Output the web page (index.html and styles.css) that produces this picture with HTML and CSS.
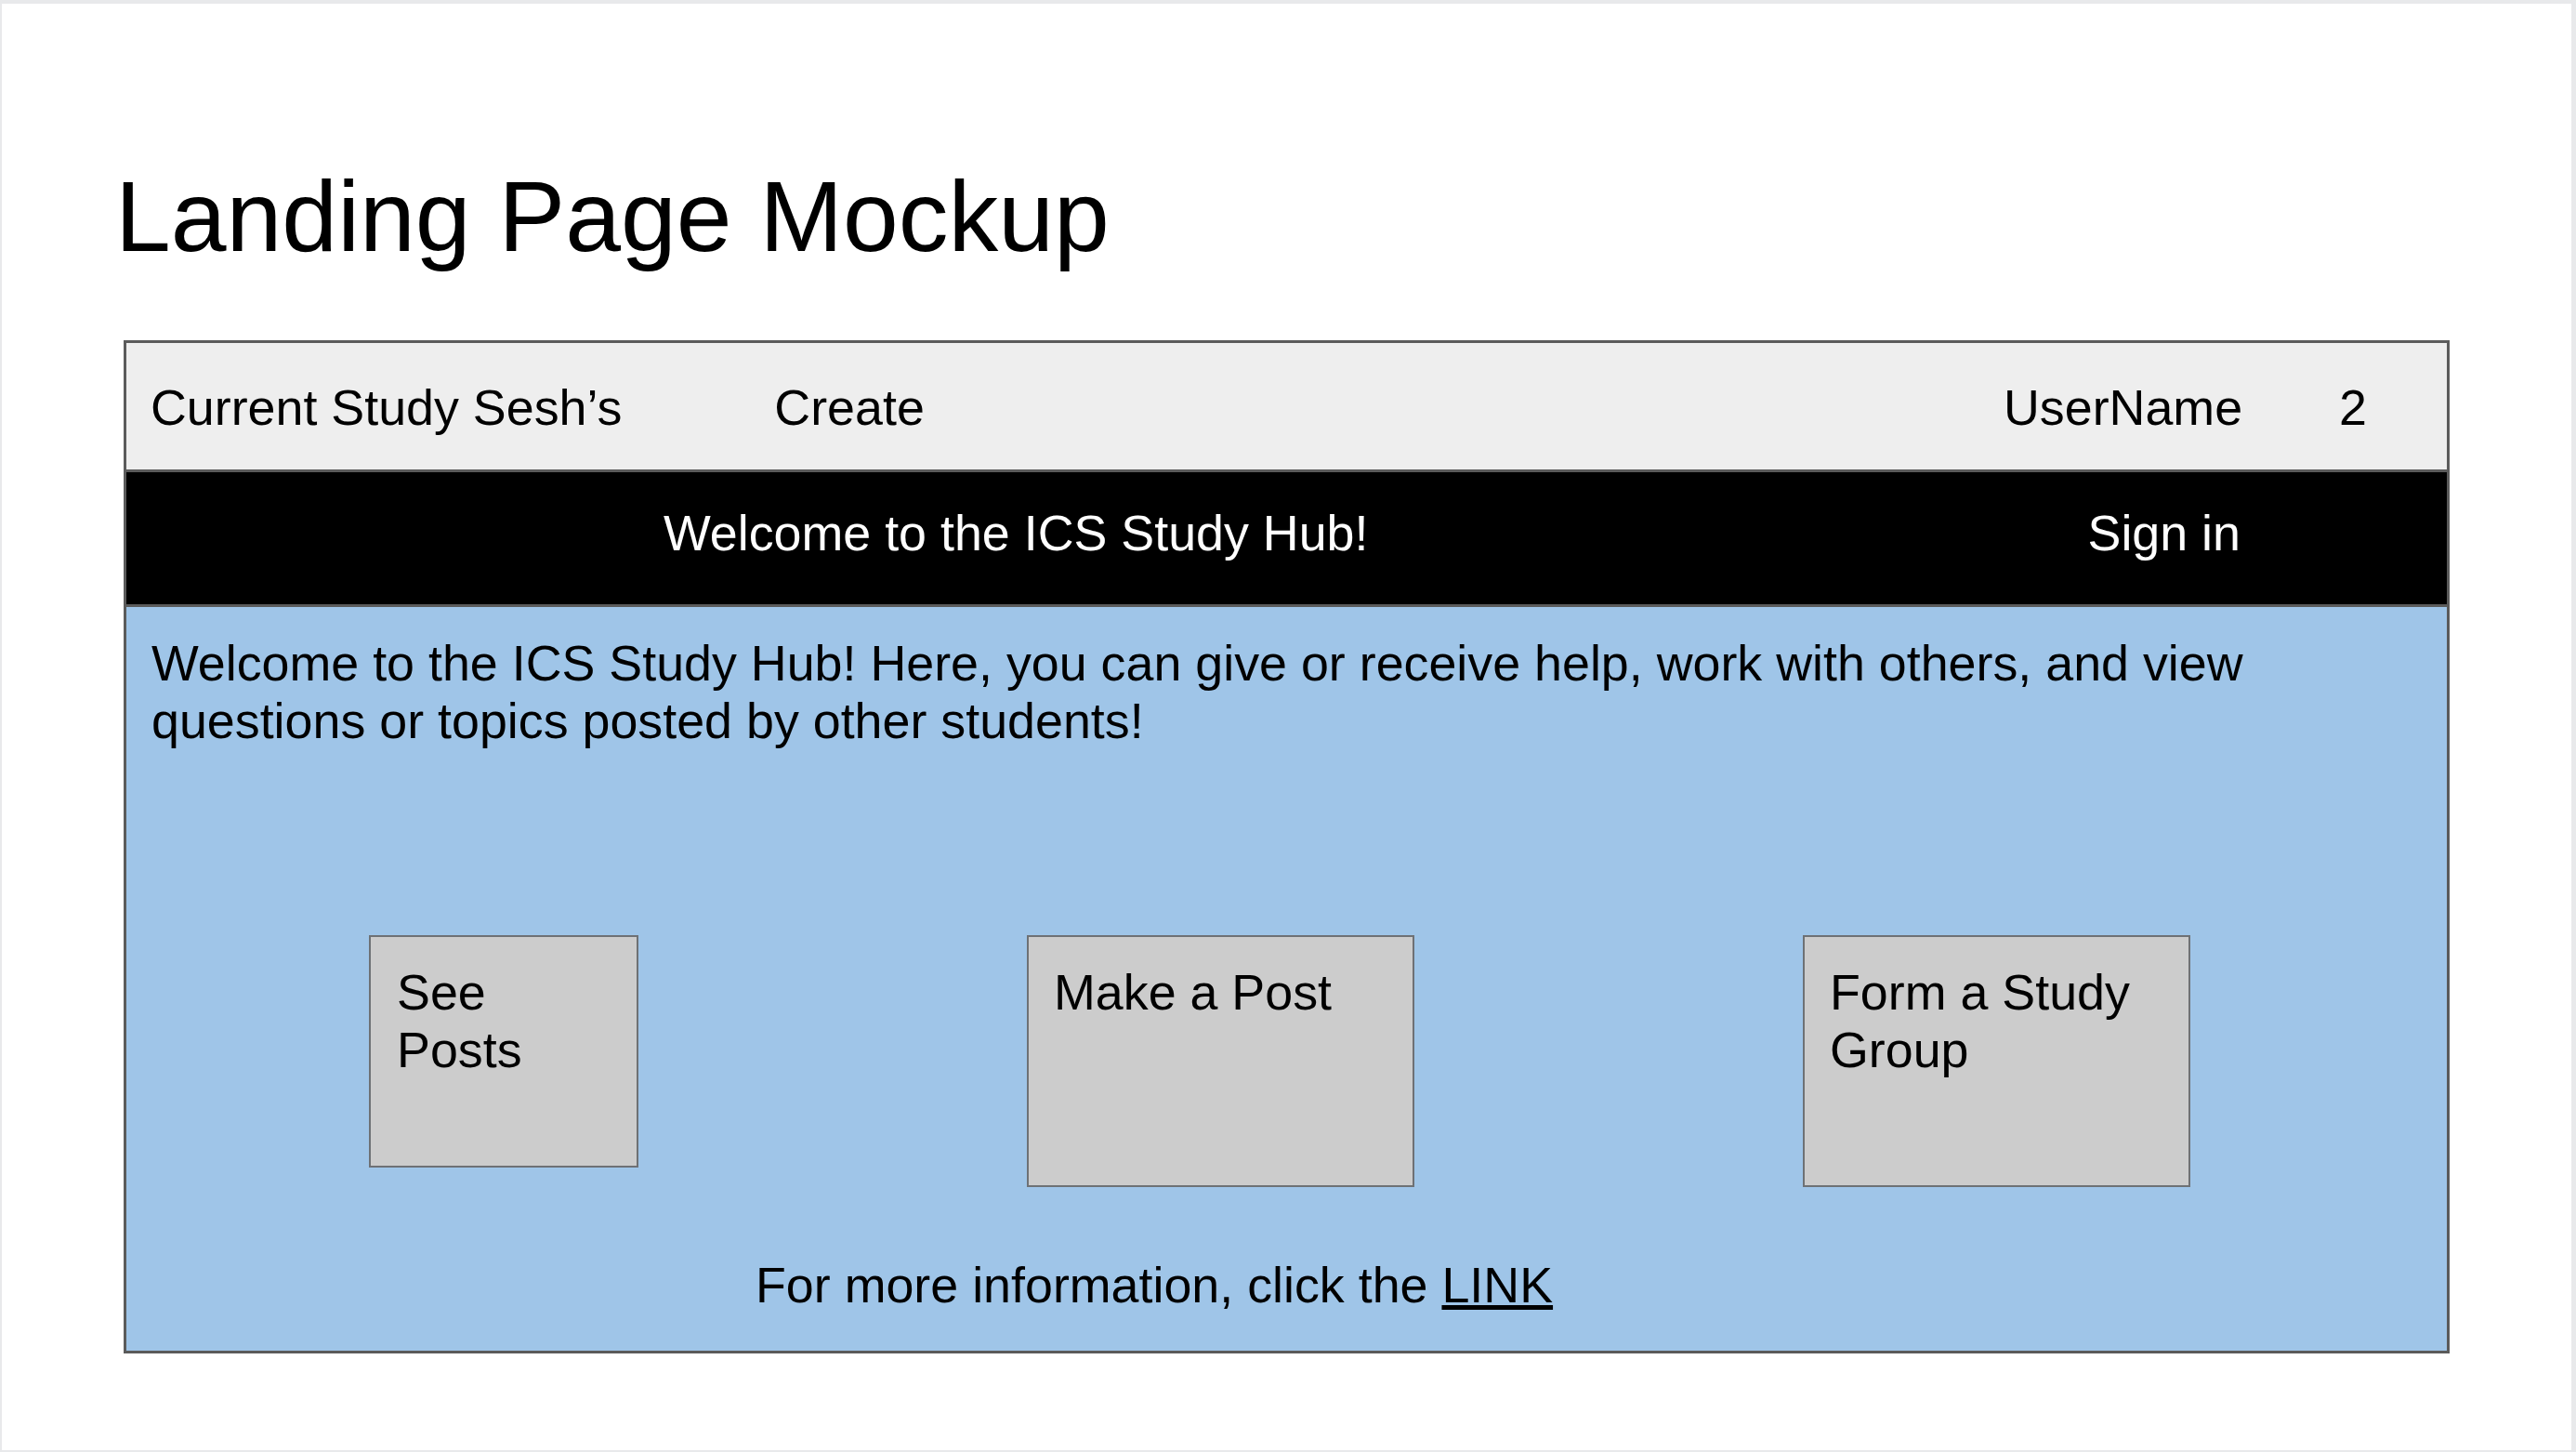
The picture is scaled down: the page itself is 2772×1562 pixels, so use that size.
FILE: index.html
```html
<!DOCTYPE html>
<html lang="en">
<head>
<meta charset="utf-8">
<title>Landing Page Mockup</title>
<link rel="stylesheet" href="styles.css">
</head>
<body>
<div class="slide">
  <h1 class="title">Landing Page Mockup</h1>
  <div class="mockup">
    <div class="topbar">
      <span class="nav-item">Current Study Sesh’s</span>
      <span class="nav-item create">Create</span>
      <span class="nav-item user">UserName</span>
      <span class="nav-item count">2</span>
    </div>
    <div class="hero">
      <span class="hero-title">Welcome to the ICS Study Hub!</span>
      <span class="signin">Sign in</span>
    </div>
    <div class="content">
      <p class="intro">Welcome to the ICS Study Hub! Here, you can give or receive help, work with others, and view questions or topics posted by other students!</p>
      <div class="actions">
        <div class="action small">See Posts</div>
        <div class="action">Make a Post</div>
        <div class="action">Form a Study Group</div>
      </div>
      <p class="more">For more information, click the <span class="link">LINK</span></p>
    </div>
  </div>
</div>
</body>
</html>
```

FILE: styles.css
```css
html, body {
  margin: 0;
  padding: 0;
}
body {
  background: #e8e9eb;
  font-family: "Liberation Sans", Arial, sans-serif;
  color: #000;
  width: 2772px;
  height: 1562px;
  overflow: hidden;
}
.slide {
  margin: 4px 5px 2px 2px;
  height: 1556px;
  background: #fff;
  box-sizing: border-box;
  padding-top: 168px;
}
.title {
  margin: 0 0 0 122px;
  font-size: 107.5px;
  line-height: 123px;
  font-weight: normal;
}
.mockup {
  margin: 71px 0 0 131px;
  width: 2503px;
  box-sizing: border-box;
  border: 3px solid #5b5b5b;
  font-size: 53.8px;
  line-height: 62px;
}
.topbar {
  box-sizing: border-box;
  border-bottom: 3px solid #5b5b5b;
  height: 139px;
  background: #eeeeee;
  display: flex;
  align-items: flex-start;
  padding: 38px 86px 0 26px;
}
.nav-item {
  white-space: nowrap;
}
.create {
  margin-left: 164px;
}
.user {
  margin-left: auto;
}
.count {
  margin-left: 104px;
}
.hero {
  height: 145px;
  box-sizing: border-box;
  border-bottom: 3px solid #5b5b5b;
  background: #000;
  color: #fff;
  display: flex;
  align-items: flex-start;
  padding: 34px 222px 0 578px;
}
.hero-title {
  white-space: nowrap;
}
.signin {
  margin-left: auto;
  white-space: nowrap;
}
.content {
  height: 800px;
  box-sizing: border-box;
  background: #9fc5e8;
  padding: 29px 30px 0 27px;
}
.intro {
  margin: 0;
}
.actions {
  display: flex;
  align-items: flex-start;
  gap: 418px;
  margin: 200px 0 0 234px;
}
.action {
  width: 417px;
  height: 271px;
  box-sizing: border-box;
  background: #cccccc;
  border: 2px solid #6e7175;
  padding: 28px 24px 0 27px;
}
.action.small {
  width: 290px;
  height: 250px;
  padding-left: 28px;
  padding-right: 22px;
}
.more {
  margin: 74px 0 0 650px;
}
.link {
  text-decoration: underline;
}
```
